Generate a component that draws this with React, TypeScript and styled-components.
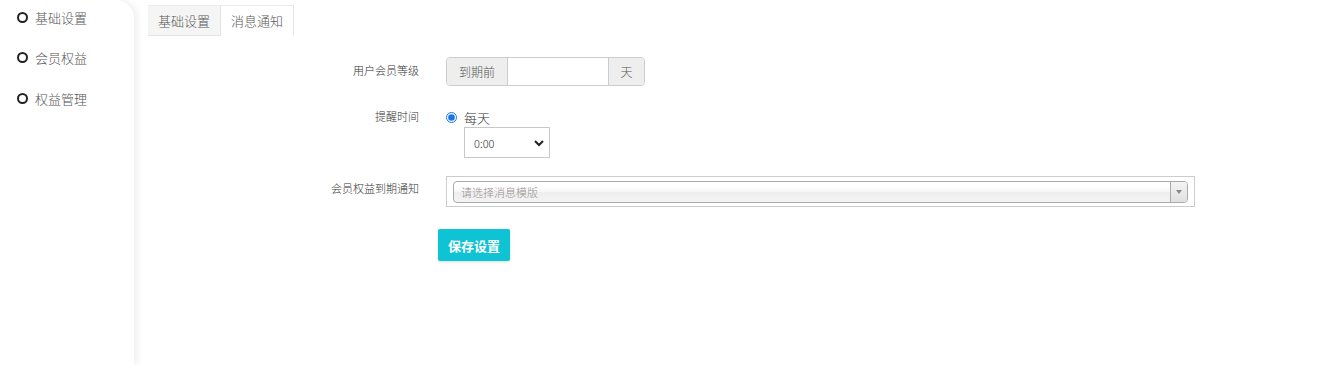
import styled, { createGlobalStyle } from 'styled-components';

const GlobalStyle = createGlobalStyle`
    html, body {
        margin: 0;
        padding: 0;
        background: #fff;
        font-family: "Microsoft YaHei", "Noto Sans CJK SC", "Liberation Sans", sans-serif;
        font-weight: 300;
    }
`;

export const Page = styled.div`
    display: flex;
    width: 1327px;
    height: 365px;
    overflow: hidden;
`;
export const Sidebar = styled.aside`
    width: 134px;
    height: 100%;
    flex-shrink: 0;
    background: #fff;
    border-top-right-radius: 18px;
    box-shadow: 3px 0 7px rgba(0, 0, 0, 0.07);
    display: flex;
    flex-direction: column;
    gap: 20.5px;
    padding-top: 7px;
    box-sizing: border-box;
`;
export const NavItem = styled.div`
    display: flex;
    align-items: center;
    gap: 7px;
    height: 20px;
    padding-left: 17px;
    font-size: 13px;
    color: #555;
    &::before {
        content: '';
        flex-shrink: 0;
        width: 11px;
        height: 11px;
        box-sizing: border-box;
        border: 2px solid #222;
        border-radius: 50%;
    }
`;
export const Main = styled.main`
    flex: 1;
    padding: 5px 0 0 14px;
`;
export const Tabs = styled.div`
    display: flex;
`;
export const Tab = styled.div<{ $active?: boolean }>`
    height: 31px;
    padding: 0 10px;
    box-sizing: border-box;
    display: flex;
    align-items: center;
    font-size: 13px;
    color: #555;
    border-top: 1px solid #ececec;
    border-right: 1px solid #e4e4e4;
    border-bottom: 1px solid ${(p) => (p.$active ? 'transparent' : '#e4e4e4')};
    background: ${(p) => (p.$active ? '#fff' : '#f5f5f5')};
`;
export const Form = styled.div`
    display: flex;
    flex-direction: column;
`;
export const Row = styled.div<{ $mt: number }>`
    display: grid;
    grid-template-columns: 271px 1fr;
    column-gap: 27px;
    margin-top: ${(p) => p.$mt}px;
`;
export const Label = styled.div<{ $pt: number }>`
    text-align: right;
    font-size: 11px;
    color: #333;
    padding-top: ${(p) => p.$pt}px;
    line-height: 14px;
`;
export const InputGroup = styled.div`
    display: flex;
    width: 199px;
    height: 29px;
    border: 1px solid #ccc;
    border-radius: 4px;
    box-sizing: border-box;
    overflow: hidden;
`;
export const Addon = styled.span<{ $w: number }>`
    width: ${(p) => p.$w}px;
    display: flex;
    align-items: center;
    justify-content: center;
    background: #eee;
    font-size: 12px;
    color: #555;
`;
export const TextInput = styled.input`
    flex: 1;
    min-width: 0;
    border: none;
    border-left: 1px solid #ccc;
    border-right: 1px solid #ccc;
    outline: none;
    padding: 0 8px;
`;
export const RadioLine = styled.label`
    display: flex;
    align-items: center;
    gap: 7px;
    height: 20px;
    font-size: 13px;
    color: #333;
    input {
        margin: 0;
        width: 11px;
        height: 11px;
        accent-color: #1a73e8;
    }
`;
export const SelectBox = styled.div`
    margin: 0 0 0 18px;
    width: 86px;
    height: 31px;
    box-sizing: border-box;
    border: 1px solid #c8c8c8;
    display: flex;
    align-items: center;
    justify-content: space-between;
    padding: 0 4px 0 9px;
    font-size: 11px;
    color: #333;
`;
export const ChosenWrap = styled.div`
    width: 749px;
    height: 31px;
    box-sizing: border-box;
    border: 1px solid #ccc;
    padding: 4px 6px;
`;
export const Chosen = styled.div`
    height: 22px;
    box-sizing: border-box;
    border: 1px solid #aaa;
    border-radius: 4px;
    background: linear-gradient(#fff 20%, #f6f6f6 50%, #eee 52%, #f4f4f4 100%);
    display: flex;
    align-items: center;
    font-size: 11px;
    color: #998f8f;
    padding-left: 7px;
`;
export const ChosenText = styled.span`
    flex: 1;
`;
export const ChosenArrow = styled.span`
    width: 16px;
    height: 100%;
    border-left: 1px solid #aaa;
    display: flex;
    align-items: center;
    justify-content: center;
    background: linear-gradient(#f4f4f4, #e0e0e0);
    border-radius: 0 3px 3px 0;
    &::after {
        content: '';
        border-left: 3px solid transparent;
        border-right: 3px solid transparent;
        border-top: 4px solid #888;
    }
`;
export const SaveButton = styled.button`
    margin: 22px 0 0 290px;
    width: 72px;
    height: 32px;
    border: none;
    border-radius: 2px;
    background: #0ec3d4;
    color: #fff;
    font-size: 13px;
    font-weight: bold;
    font-family: inherit;
    box-shadow: 0 1px 3px rgba(0, 0, 0, 0.15);
`;

const Chevron = () => (
    <svg width="12" height="12" viewBox="0 0 12 12">
        <path d="M2 4 L6 8 L10 4" fill="none" stroke="#222" strokeWidth="2" />
    </svg>
);

export default function App() {
    return (
        <>
            <GlobalStyle />
            <Page>
                <Sidebar>
                    <NavItem>基础设置</NavItem>
                    <NavItem>会员权益</NavItem>
                    <NavItem>权益管理</NavItem>
                </Sidebar>
                <Main>
                    <Tabs>
                        <Tab>基础设置</Tab>
                        <Tab $active>消息通知</Tab>
                    </Tabs>
                    <Form>
                        <Row $mt={21}>
                            <Label $pt={6}>用户会员等级</Label>
                            <InputGroup>
                                <Addon $w={60}>到期前</Addon>
                                <TextInput />
                                <Addon $w={35}>天</Addon>
                            </InputGroup>
                        </Row>
                        <Row $mt={21}>
                            <Label $pt={2}>提醒时间</Label>
                            <div>
                                <RadioLine>
                                    <input type="radio" defaultChecked />
                                    每天
                                </RadioLine>
                                <SelectBox>
                                    0:00
                                    <Chevron />
                                </SelectBox>
                            </div>
                        </Row>
                        <Row $mt={18}>
                            <Label $pt={5}>会员权益到期通知</Label>
                            <ChosenWrap>
                                <Chosen>
                                    <ChosenText>请选择消息模版</ChosenText>
                                    <ChosenArrow />
                                </Chosen>
                            </ChosenWrap>
                        </Row>
                        <SaveButton>保存设置</SaveButton>
                    </Form>
                </Main>
            </Page>
        </>
    );
}
